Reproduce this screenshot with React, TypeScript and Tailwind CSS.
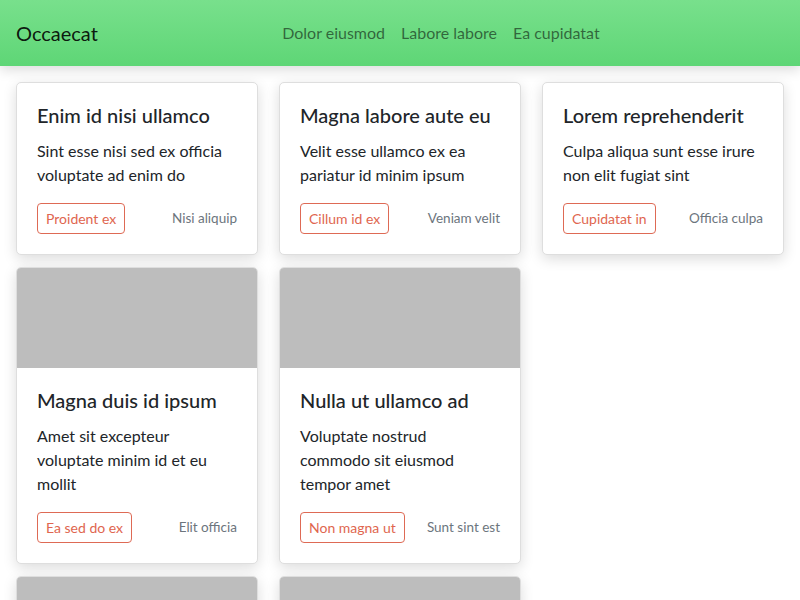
const textCards = [
  {
    title: 'Enim id nisi ullamco',
    body: 'Sint esse nisi sed ex officia voluptate ad enim do',
    action: 'Proident ex',
    meta: 'Nisi aliquip'
  },
  {
    title: 'Magna labore aute eu',
    body: 'Velit esse ullamco ex ea pariatur id minim ipsum',
    action: 'Cillum id ex',
    meta: 'Veniam velit'
  },
  {
    title: 'Lorem reprehenderit',
    body: 'Culpa aliqua sunt esse irure non elit fugiat sint',
    action: 'Cupidatat in',
    meta: 'Officia culpa'
  }
];

const imageCards = [
  {
    title: 'Magna duis id ipsum',
    body: 'Amet sit excepteur voluptate minim id et eu mollit',
    action: 'Ea sed do ex',
    meta: 'Elit officia'
  },
  {
    title: 'Nulla ut ullamco ad',
    body: 'Voluptate nostrud commodo sit eiusmod tempor amet',
    action: 'Non magna ut',
    meta: 'Sunt sint est'
  },
  null,
  {
    title: 'Irure anim dolore',
    body: 'Eu aute nulla sint qui laboris dolor',
    action: 'Anim est',
    meta: 'Duis anim'
  },
  {
    title: 'Do sunt laborum',
    body: 'Ipsum velit cillum ex sint officia',
    action: 'Qui non',
    meta: 'Esse elit'
  }
];

type CardData = { title: string; body: string; action: string; meta: string };

const Card = ({ card, image }: { card: CardData; image?: boolean }) => (
  <div className="bg-white border border-[#dedede] rounded-[5px] overflow-hidden shadow-[0_4px_14px_rgba(0,0,0,0.14)]">
    {image && <div className="h-[100px] bg-[#bdbdbd]" />}
    <div className="p-5">
      <h5 className="text-[20px] leading-[24px] font-medium text-[#212529] mb-3">{card.title}</h5>
      <p className="text-[16px] leading-[24px] text-[#212529] mb-4">{card.body}</p>
      <div className="flex items-center justify-between">
        <button className="h-[31px] px-2 text-[14px] leading-[21px] text-[#e0664f] border border-[#de6a55] rounded-[4px] bg-white">
          {card.action}
        </button>
        <span className="text-[13.5px] text-[#6c757d]">{card.meta}</span>
      </div>
    </div>
  </div>
);

const App = () => {
  return (
    <div className="h-[600px] overflow-hidden bg-white font-['Segoe_UI','Lato',sans-serif]">
      <nav className="h-[66px] px-4 flex items-center bg-gradient-to-b from-[#78e08c] to-[#5ed676] shadow-[0_4px_12px_rgba(0,0,0,0.14)] relative z-10">
        <a href="#" className="text-[20px] text-black/90">
          Occaecat
        </a>
        <ul className="flex mx-auto">
          {['Dolor eiusmod', 'Labore labore', 'Ea cupidatat'].map((link) => (
            <li key={link}>
              <a href="#" className="px-2 text-[16px] text-black/55">
                {link}
              </a>
            </li>
          ))}
        </ul>
      </nav>

      <main className="px-4 pt-4 grid grid-cols-3 gap-x-[21px] gap-y-[12px] items-start">
        {textCards.map((card) => (
          <Card key={card.title} card={card} />
        ))}
        {imageCards.map((card, i) =>
          card ? <Card key={card.title} card={card} image /> : <div key={`empty-${i}`} />
        )}
      </main>
    </div>
  );
};

export default App;
